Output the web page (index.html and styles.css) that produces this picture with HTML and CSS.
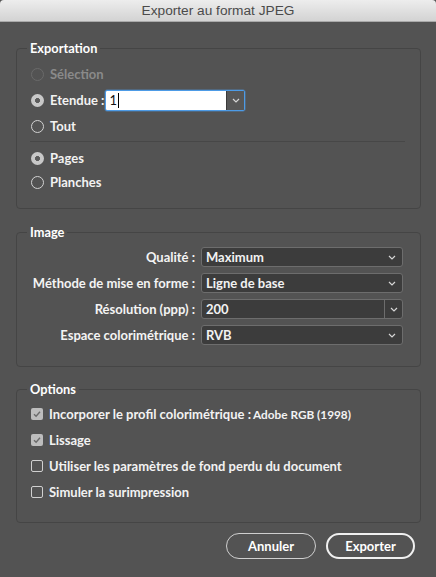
FILE: index.html
```html
<!DOCTYPE html>
<html lang="fr">
<head>
<meta charset="utf-8">
<title>Exporter au format JPEG</title>
<link rel="stylesheet" href="styles.css">
</head>
<body>
<div class="titlebar"><span>Exporter au format JPEG</span></div>
<main class="dialog">
  <fieldset class="group g-export">
    <legend>Exportation</legend>
    <div class="export-body">
      <div class="row disabled"><span class="radio"></span><span>Sélection</span></div>
      <div class="row"><span class="radio checked"></span><span class="etendue-label">Etendue :</span>
        <div class="combo">
          <span class="combo-field">1<span class="caret"></span></span>
          <span class="combo-btn"><svg width="8" height="5" viewBox="0 0 8 5"><path d="M1 1 L4 4 L7 1" fill="none" stroke="#d6d6d6" stroke-width="1.2"/></svg></span>
        </div>
      </div>
      <div class="row"><span class="radio"></span><span>Tout</span></div>
      <hr class="sep">
      <div class="row short"><span class="radio checked"></span><span>Pages</span></div>
      <div class="row short"><span class="radio"></span><span>Planches</span></div>
    </div>
  </fieldset>

  <fieldset class="group g-image">
    <legend>Image</legend>
    <div class="image-body">
      <span class="flabel">Qualité :</span>
      <div class="select"><span>Maximum</span><svg width="8" height="5" viewBox="0 0 8 5"><path d="M1 1 L4 4 L7 1" fill="none" stroke="#d6d6d6" stroke-width="1.2"/></svg></div>
      <span class="flabel">Méthode de mise en forme :</span>
      <div class="select"><span>Ligne de base</span><svg width="8" height="5" viewBox="0 0 8 5"><path d="M1 1 L4 4 L7 1" fill="none" stroke="#d6d6d6" stroke-width="1.2"/></svg></div>
      <span class="flabel">Résolution (ppp) :</span>
      <div class="select combo-select"><span class="cs-text">200</span><span class="cs-btn"><svg width="8" height="5" viewBox="0 0 8 5"><path d="M1 1 L4 4 L7 1" fill="none" stroke="#d6d6d6" stroke-width="1.2"/></svg></span></div>
      <span class="flabel">Espace colorimétrique :</span>
      <div class="select"><span>RVB</span><svg width="8" height="5" viewBox="0 0 8 5"><path d="M1 1 L4 4 L7 1" fill="none" stroke="#d6d6d6" stroke-width="1.2"/></svg></div>
    </div>
  </fieldset>

  <fieldset class="group g-options">
    <legend>Options</legend>
    <div class="options-body">
      <div class="row"><span class="check checked"><svg width="12" height="12" viewBox="0 0 12 12"><path d="M3 6.2 L5.1 8.3 L9 3.8" fill="none" stroke="#6b6b6b" stroke-width="1.4"/></svg></span><span>Incorporer le profil colorimétrique :<span class="small">Adobe RGB (1998)</span></span></div>
      <div class="row"><span class="check checked"><svg width="12" height="12" viewBox="0 0 12 12"><path d="M3 6.2 L5.1 8.3 L9 3.8" fill="none" stroke="#6b6b6b" stroke-width="1.4"/></svg></span><span>Lissage</span></div>
      <div class="row"><span class="check"></span><span>Utiliser les paramètres de fond perdu du document</span></div>
      <div class="row"><span class="check"></span><span>Simuler la surimpression</span></div>
    </div>
  </fieldset>

  <div class="buttons">
    <button class="btn">Annuler</button>
    <button class="btn default">Exporter</button>
  </div>
</main>
</body>
</html>
```

FILE: styles.css
```css
html, body {
  margin: 0;
  padding: 0;
}
body {
  width: 436px;
  height: 577px;
  overflow: hidden;
  background: #535353;
  font-family: Lato, "Open Sans", sans-serif;
  font-weight: 700;
  font-size: 13px;
  color: #f2f2f2;
}
.titlebar {
  height: 21px;
  border-bottom: 1px solid #a9a9a9;
  background: linear-gradient(#ededed, #d3d3d3);
  border-radius: 4px 4px 0 0;
  display: flex;
  align-items: center;
  justify-content: center;
  font: 400 13.7px "Liberation Sans", Arial, sans-serif;
  color: #4b4b4b;
}
.dialog {
  padding: 18px 15px 0 16px;
}
.group {
  margin: 0;
  padding: 0;
  border: 1px solid #454545;
  border-radius: 4px;
  min-width: 0;
}
.group legend {
  margin-left: 10px;
  padding: 0 3px;
  line-height: 16px;
  font-size: 12.8px;
  color: #ffffff;
}
.g-image { margin-top: 15px; }
.g-options { margin-top: 14px; }

.export-body {
  padding: 5px 15px 14px 14px;
}
.row {
  display: flex;
  align-items: center;
  height: 26px;
  gap: 6px;
}
.row.short { height: 24px; }
.row.disabled { color: #8a8a8a; }
.radio {
  width: 13px;
  height: 13px;
  box-sizing: border-box;
  border: 1px solid #d2d2d2;
  border-radius: 50%;
  flex: none;
}
.disabled .radio { border-color: #6a6a6a; }
.radio.checked {
  border: none;
  background: radial-gradient(circle, #5c5c5c 0 2.2px, #c8c8c8 2.8px);
}
.etendue-label { margin-right: -5px; }
.combo {
  display: flex;
  width: 140px;
  height: 21px;
  box-sizing: border-box;
  border: 1px solid #4d9be6;
  box-shadow: 0 0 0 0.5px rgba(77, 155, 230, 0.6);
  border-radius: 2px;
  overflow: hidden;
}
.combo-field {
  flex: 1;
  background: #ffffff;
  color: #111;
  font-weight: 400;
  font-size: 13px;
  display: flex;
  align-items: center;
  padding-left: 3px;
}
.caret {
  width: 1px;
  height: 15px;
  background: #000;
  margin-left: 1px;
}
.combo-btn {
  width: 17px;
  border-left: 1px solid #3a3a3a;
  background: #575757;
  display: flex;
  align-items: center;
  justify-content: center;
}
.sep {
  border: 0;
  border-top: 1px solid #474747;
  margin: 2px 0 4px -1px;
  height: 0;
}

.image-body {
  padding: 7px 17px 21px 0;
  display: grid;
  grid-template-columns: 1fr 202px;
  column-gap: 6px;
  row-gap: 6px;
  align-items: center;
}
.flabel {
  text-align: right;
  color: #f4f4f4;
}
.select {
  height: 20px;
  box-sizing: border-box;
  border: 1px solid #6d6d6d;
  border-radius: 3px;
  background: #3c3c3c;
  display: flex;
  align-items: center;
  justify-content: space-between;
  padding: 0 6px 0 4px;
}
.combo-select {
  padding: 0 0 0 4px;
}
.cs-text { flex: 1; }
.cs-btn {
  width: 17px;
  align-self: stretch;
  border-left: 1px solid #6d6d6d;
  display: flex;
  align-items: center;
  justify-content: center;
}

.options-body {
  padding: 4px 15px 17px 14px;
}
.check {
  width: 12px;
  height: 12px;
  box-sizing: border-box;
  border: 1px solid #d0d0d0;
  border-radius: 2px;
  flex: none;
  display: flex;
}
.check.checked {
  border: none;
  background: #bdbdbd;
}
.small {
  font-size: 11.8px;
  margin-left: 2px;
}

.buttons {
  display: flex;
  justify-content: flex-end;
  gap: 10px;
  margin-top: 10px;
  padding-right: 6px;
}
.btn {
  width: 90px;
  height: 26px;
  box-sizing: border-box;
  border-radius: 13px;
  border: 1px solid #cfcfcf;
  background: transparent;
  color: #ffffff;
  font: inherit;
  font-size: 13px;
  padding: 0;
}
.btn.default {
  width: 89px;
  border: 2px solid #f0f0f0;
}
```
